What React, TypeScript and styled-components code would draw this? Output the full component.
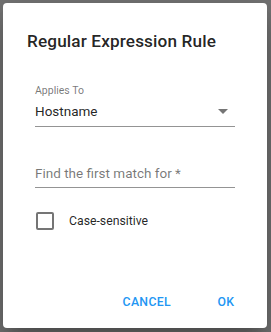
import React, { useState } from "react";
import styled, { createGlobalStyle } from "styled-components";

const GlobalStyle = createGlobalStyle`
  html, body {
    margin: 0;
    padding: 0;
    background: #747474;
  }
  body {
    font-family: Roboto, "Liberation Sans", Arial, sans-serif;
  }
`;

const Backdrop = styled.div`
  width: 271px;
  height: 332px;
  padding: 3px;
  box-sizing: border-box;
`;

const Card = styled.div`
  width: 264px;
  height: 325px;
  background: #fff;
  border-radius: 4px;
  box-shadow: 0px 11px 15px -7px rgba(0, 0, 0, 0.2),
    0px 24px 38px 3px rgba(0, 0, 0, 0.14), 0px 9px 46px 8px rgba(0, 0, 0, 0.12);
  display: flex;
  flex-direction: column;
  box-sizing: border-box;
`;

const Title = styled.h2`
  margin: 0;
  padding: 24px 24px 0;
  font-size: 17.2px;
  font-weight: 500;
  line-height: 28px;
  letter-spacing: 0.0075em;
  color: rgba(0, 0, 0, 0.87);
`;

const Content = styled.div`
  flex: 1;
  padding: 0 32px;
  display: flex;
  flex-direction: column;
`;

const Field = styled.div<{ $top: number }>`
  margin-top: ${(p) => p.$top}px;
  display: flex;
  flex-direction: column;
`;

const SmallLabel = styled.label`
  font-size: 10.5px;
  line-height: 12px;
  color: rgba(0, 0, 0, 0.54);
  margin-bottom: 4px;
`;

const InputRow = styled.div<{ $muted?: boolean; $pad: number }>`
  display: flex;
  align-items: center;
  justify-content: space-between;
  font-size: 13.5px;
  line-height: 20px;
  padding-bottom: ${(p) => p.$pad}px;
  border-bottom: 1px solid rgba(0, 0, 0, 0.42);
  color: ${(p) => (p.$muted ? "rgba(0, 0, 0, 0.54)" : "rgba(0, 0, 0, 0.87)")};
`;

const Arrow = styled.svg`
  width: 24px;
  height: 24px;
  margin: -2px 0 -2px 0;
  fill: rgba(0, 0, 0, 0.54);
`;

const CheckRow = styled.label`
  margin-top: 24px;
  display: flex;
  align-items: center;
  gap: 15px;
  font-size: 12.25px;
  color: rgba(0, 0, 0, 0.87);
  cursor: pointer;
`;

const Box = styled.span<{ $on: boolean }>`
  width: 18px;
  height: 18px;
  margin-left: 1px;
  box-sizing: border-box;
  border: 2px solid rgba(0, 0, 0, 0.54);
  border-radius: 2px;
  background: ${(p) => (p.$on ? "rgba(0, 0, 0, 0.54)" : "transparent")};
`;

const Actions = styled.div`
  display: flex;
  justify-content: flex-end;
  gap: 7px;
  padding: 0 9px 8px;
`;

const TextButton = styled.button`
  min-width: 64px;
  height: 36px;
  padding: 6px 16px;
  border: none;
  background: transparent;
  border-radius: 4px;
  font-family: inherit;
  font-size: 12.25px;
  font-weight: 500;
  letter-spacing: 0.02857em;
  color: #2196f3;
  cursor: pointer;
  &:hover {
    background: rgba(33, 150, 243, 0.08);
  }
`;

const App = () => {
  const [caseSensitive, setCaseSensitive] = useState(false);
  return (
    <Backdrop>
      <GlobalStyle />
      <Card>
        <Title>Regular Expression Rule</Title>
        <Content>
          <Field $top={30}>
            <SmallLabel>Applies To</SmallLabel>
            <InputRow $pad={5}>
              Hostname
              <Arrow viewBox="0 0 24 24">
                <path d="M7 10l5 5 5-5z" />
              </Arrow>
            </InputRow>
          </Field>
          <Field $top={36}>
            <InputRow $muted $pad={4}>
              Find the first match for *
            </InputRow>
          </Field>
          <CheckRow onClick={() => setCaseSensitive(!caseSensitive)}>
            <Box $on={caseSensitive} />
            Case-sensitive
          </CheckRow>
        </Content>
        <Actions>
          <TextButton>CANCEL</TextButton>
          <TextButton>OK</TextButton>
        </Actions>
      </Card>
    </Backdrop>
  );
};

export default App;
